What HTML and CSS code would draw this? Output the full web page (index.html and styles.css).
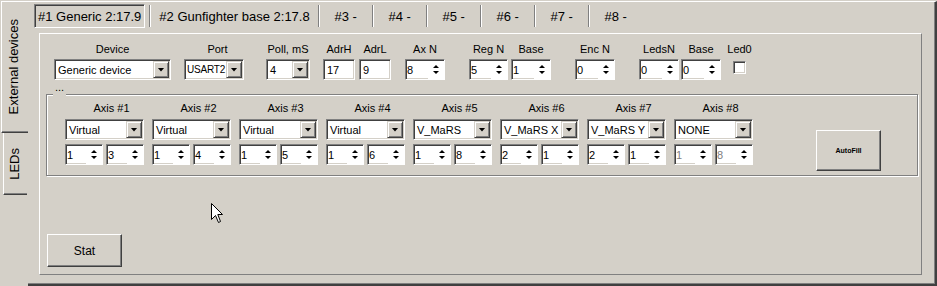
FILE: index.html
```html
<!DOCTYPE html>
<html lang="en">

<head>
    <meta charset="UTF-8">
    <title>External devices</title>
    <link rel="stylesheet" href="styles.css">
</head>

<body>
    <div class="window">
        <div class="vtabs">
            <div class="vtab active"><span>External devices</span></div>
            <div class="vtab leds"><span>LEDs</span></div>
        </div>

        <div class="outer">
            <div class="tabs">
                <div class="tab active">#1 Generic 2:17.9</div>
                <i class="sep"></i>
                <div class="tab">#2 Gunfighter base 2:17.8</div>
                <i class="sep"></i>
                <div class="tab">#3 -</div>
                <i class="sep"></i>
                <div class="tab">#4 -</div>
                <i class="sep"></i>
                <div class="tab">#5 -</div>
                <i class="sep"></i>
                <div class="tab">#6 -</div>
                <i class="sep"></i>
                <div class="tab">#7 -</div>
                <i class="sep"></i>
                <div class="tab">#8 -</div>
            </div>

            <div class="page">
                <!-- device settings -->
                <div class="dev-row">
                    <div class="fld f-device">
                        <label>Device</label>
                        <div class="combo"><span class="val">Generic device</span><span class="drop"></span></div>
                    </div>
                    <div class="fld f-port">
                        <label>Port</label>
                        <div class="combo"><span class="val">USART2</span><span class="drop"></span></div>
                    </div>
                    <div class="fld f-poll">
                        <label>Poll, mS</label>
                        <div class="combo"><span class="val">4</span><span class="drop"></span></div>
                    </div>
                    <div class="fld f-adrh">
                        <label>AdrH</label>
                        <div class="edit">17</div>
                    </div>
                    <div class="fld f-adrl">
                        <label>AdrL</label>
                        <div class="edit">9</div>
                    </div>
                    <div class="fld f-axn">
                        <label>Ax N</label>
                        <div class="spin"><span class="txt">8</span><span class="arrows"></span></div>
                    </div>
                    <div class="fld f-regn">
                        <label>Reg N</label>
                        <div class="spin"><span class="txt">5</span><span class="arrows"></span></div>
                    </div>
                    <div class="fld f-base">
                        <label>Base</label>
                        <div class="spin"><span class="txt">1</span><span class="arrows"></span></div>
                    </div>
                    <div class="fld f-encn">
                        <label>Enc N</label>
                        <div class="spin"><span class="txt">0</span><span class="arrows"></span></div>
                    </div>
                    <div class="fld f-ledsn">
                        <label>LedsN</label>
                        <div class="spin"><span class="txt">0</span><span class="arrows"></span></div>
                    </div>
                    <div class="fld f-base2">
                        <label>Base</label>
                        <div class="spin"><span class="txt">0</span><span class="arrows"></span></div>
                    </div>
                    <div class="fld f-led0">
                        <label>Led0</label>
                        <div class="check"></div>
                    </div>
                </div>

                <!-- axes -->
                <div class="group">
                    <span class="caption">...</span>
                    <div class="axes">
                        <div class="axis">
                            <label>Axis #1</label>
                            <div class="combo"><span class="val">Virtual</span><span class="drop"></span></div>
                            <div class="pair">
                                <div class="spin"><span class="txt">1</span><span class="arrows"></span></div>
                                <div class="spin"><span class="txt">3</span><span class="arrows"></span></div>
                            </div>
                        </div>
                        <div class="axis">
                            <label>Axis #2</label>
                            <div class="combo"><span class="val">Virtual</span><span class="drop"></span></div>
                            <div class="pair">
                                <div class="spin"><span class="txt">1</span><span class="arrows"></span></div>
                                <div class="spin"><span class="txt">4</span><span class="arrows"></span></div>
                            </div>
                        </div>
                        <div class="axis">
                            <label>Axis #3</label>
                            <div class="combo"><span class="val">Virtual</span><span class="drop"></span></div>
                            <div class="pair">
                                <div class="spin"><span class="txt">1</span><span class="arrows"></span></div>
                                <div class="spin"><span class="txt">5</span><span class="arrows"></span></div>
                            </div>
                        </div>
                        <div class="axis">
                            <label>Axis #4</label>
                            <div class="combo"><span class="val">Virtual</span><span class="drop"></span></div>
                            <div class="pair">
                                <div class="spin"><span class="txt">1</span><span class="arrows"></span></div>
                                <div class="spin"><span class="txt">6</span><span class="arrows"></span></div>
                            </div>
                        </div>
                        <div class="axis">
                            <label>Axis #5</label>
                            <div class="combo"><span class="val">V_MaRS</span><span class="drop"></span></div>
                            <div class="pair">
                                <div class="spin"><span class="txt">1</span><span class="arrows"></span></div>
                                <div class="spin"><span class="txt">8</span><span class="arrows"></span></div>
                            </div>
                        </div>
                        <div class="axis">
                            <label>Axis #6</label>
                            <div class="combo"><span class="val">V_MaRS X</span><span class="drop"></span></div>
                            <div class="pair">
                                <div class="spin"><span class="txt">2</span><span class="arrows"></span></div>
                                <div class="spin"><span class="txt">1</span><span class="arrows"></span></div>
                            </div>
                        </div>
                        <div class="axis">
                            <label>Axis #7</label>
                            <div class="combo"><span class="val">V_MaRS Y</span><span class="drop"></span></div>
                            <div class="pair">
                                <div class="spin"><span class="txt">2</span><span class="arrows"></span></div>
                                <div class="spin"><span class="txt">1</span><span class="arrows"></span></div>
                            </div>
                        </div>
                        <div class="axis">
                            <label>Axis #8</label>
                            <div class="combo"><span class="val">NONE</span><span class="drop"></span></div>
                            <div class="pair">
                                <div class="spin disabled"><span class="txt">1</span><span class="arrows"></span></div>
                                <div class="spin disabled"><span class="txt">8</span><span class="arrows"></span></div>
                            </div>
                        </div>
                    </div>
                    <button class="btn autofill">AutoFill</button>
                </div>

                <button class="btn stat">Stat</button>
            </div>
        </div>

        <svg class="cursor" width="13" height="21" viewBox="0 0 13 21">
            <path d="M0.5 0.5 V16.5 L4.5 12.5 L7.5 19.5 L9.5 18.5 L6.8 11.5 H11.5 Z" fill="#fff" stroke="#000" stroke-width="1" />
        </svg>
    </div>
</body>

</html>
```

FILE: styles.css
```css
* {
    box-sizing: border-box;
}

body {
    margin: 0;
    background: #d4d0c8;
    font-family: "Liberation Sans", Arial, sans-serif;
    font-size: 11px;
    color: #000;
    overflow: hidden;
}

.window {
    position: relative;
    display: flex;
    width: 937px;
    height: 286px;
    padding-top: 1px;
}

/* left side tabs */
.vtabs {
    flex: none;
    width: 28px;
    display: flex;
    flex-direction: column;
}

.vtab {
    display: flex;
    align-items: center;
    justify-content: center;
    font-size: 13px;
}

.vtab span {
    writing-mode: vertical-rl;
    transform: rotate(180deg);
    white-space: nowrap;
}

.vtab.active {
    margin-left: 1px;
    height: 132px;
    padding-right: 4px;
    border-top: 1px solid #fff;
    border-left: 1px solid #fff;
    border-bottom: 1px solid #404040;
    box-shadow: inset 0 -1px #808080;
}

.vtab.leds {
    margin-left: 3px;
    width: 24px;
    height: 62px;
    padding-right: 2px;
    border-left: 1px solid #fff;
    border-bottom: 1px solid #404040;
    box-shadow: inset 0 -1px #808080;
}

.outer {
    flex: 1;
    border-top: 1px solid #fff;
    border-right: 2px solid #404040;
    border-bottom: 2px solid #404040;
    box-shadow: inset -1px -1px #808080;
}

/* top tabs */
.tabs {
    display: flex;
    align-items: center;
    height: 24px;
    margin: 2px 0 0 6px;
}

.tab {
    display: flex;
    align-items: center;
    justify-content: center;
    height: 24px;
    min-width: 44px;
    padding: 0 3px;
    border: 1px solid transparent;
    font-size: 13px;
    white-space: nowrap;
}

.tab.active {
    border-color: #808080 #fff #fff #808080;
    box-shadow: inset 1px 1px #404040;
}

.sep {
    width: 2px;
    height: 22px;
    margin: 0 4px;
    border-left: 1px solid #808080;
    border-right: 1px solid #fff;
}

.page {
    width: 883px;
    height: 242px;
    margin: 5px 0 0 11px;
    padding: 9px 0 0 6px;
    border: 1px solid;
    border-color: #fff #808080 #808080 #fff;
}

/* controls */
.combo,
.edit,
.spin,
.check {
    height: 21px;
    background: #fff;
    border: 1px solid;
    border-color: #808080 #fff #fff #808080;
    box-shadow: inset 1px 1px #404040, inset -1px -1px #d4d0c8;
}

.combo {
    display: flex;
    align-items: center;
    padding: 1px;
}

.combo .val {
    flex: 1;
    min-width: 0;
    padding-left: 2px;
    white-space: nowrap;
    overflow: hidden;
}

.drop {
    flex: none;
    display: flex;
    align-items: center;
    justify-content: center;
    width: 16px;
    height: 17px;
    background: #d4d0c8;
    border: 1px solid;
    border-color: #d4d0c8 #404040 #404040 #d4d0c8;
    box-shadow: inset 1px 1px #fff, inset -1px -1px #808080;
}

.drop::after {
    content: "";
    width: 7px;
    height: 4px;
    background: #000;
    clip-path: polygon(0 0, 7px 0, 3.5px 4px);
}

.edit {
    display: flex;
    align-items: center;
    padding-left: 3px;
}

.spin {
    display: flex;
    padding: 1px 0 0 1px;
    box-shadow: inset 1px 1px #404040;
}

.spin .txt {
    flex: 1;
    display: flex;
    align-items: center;
    border-bottom: 1px solid #d4d0c8;
}

.spin.disabled .txt {
    color: #808080;
}

.arrows {
    flex: none;
    width: 16px;
    display: flex;
    flex-direction: column;
    align-items: center;
    justify-content: center;
    gap: 3px;
    padding-bottom: 2px;
}

.arrows::before,
.arrows::after {
    content: "";
    border-left: 3px solid transparent;
    border-right: 3px solid transparent;
}

.arrows::before {
    border-bottom: 3px solid #000;
}

.arrows::after {
    border-top: 3px solid #000;
}

.check {
    width: 13px;
    height: 13px;
    margin-top: 2px;
}

/* device row */
.dev-row {
    display: flex;
    align-items: flex-start;
    padding-left: 8px;
}

.fld {
    display: flex;
    flex-direction: column;
    align-items: center;
}

.fld label {
    line-height: 13px;
    margin-bottom: 3px;
    white-space: nowrap;
}

.fld .combo,
.fld .edit,
.fld .spin {
    align-self: stretch;
}

.f-device { width: 117px; }
.f-port { width: 60px; margin-left: 13px; }
.f-port label { padding-left: 7px; }
.f-port .val { padding-left: 1px; font-size: 10px; letter-spacing: -0.2px; }
.f-poll { width: 44px; margin-left: 22px; }
.f-adrh { width: 32px; margin-left: 13px; }
.f-adrl { width: 32px; margin-left: 4px; }
.f-axn { width: 40px; margin-left: 14px; }
.f-regn { width: 39px; margin-left: 24px; }
.f-base { width: 40px; margin-left: 3px; }
.f-encn { width: 40px; margin-left: 24px; }
.f-ledsn { width: 40px; margin-left: 24px; }
.f-base2 { width: 40px; margin-left: 2px; }
.f-led0 { width: 21px; margin-left: 8px; }

/* axes group */
.group {
    position: relative;
    display: flex;
    align-items: flex-start;
    width: 872px;
    height: 82px;
    margin-top: 14px;
    padding: 7px 0 0 18px;
    border: 1px solid #808080;
    box-shadow: 1px 1px #fff, inset 1px 1px #fff;
}

.caption {
    position: absolute;
    top: -13px;
    left: 6px;
    height: 15px;
    padding: 0 2px;
    line-height: 11px;
    background: #d4d0c8;
}

.axes {
    display: grid;
    grid-template-columns: repeat(8, 79px);
    column-gap: 8px;
}

.axis {
    display: flex;
    flex-direction: column;
}

.axis label {
    line-height: 13px;
    margin-bottom: 4px;
    padding-left: 14px;
    text-align: center;
    white-space: nowrap;
}

.pair {
    display: flex;
    gap: 3px;
    margin-top: 4px;
}

.pair .spin {
    flex: 1;
}

/* buttons */
.btn {
    display: block;
    background: #d4d0c8;
    border: 1px solid;
    border-color: #fff #404040 #404040 #fff;
    box-shadow: inset -1px -1px #808080;
    font-family: "Liberation Sans", Arial, sans-serif;
    color: #000;
    padding: 0;
}

.autofill {
    width: 65px;
    height: 41px;
    margin: 28px 0 0 63px;
    font-size: 7px;
    font-weight: bold;
}

.stat {
    width: 75px;
    height: 33px;
    margin: 58px 0 0 1px;
    font-size: 12px;
}

.cursor {
    position: absolute;
    left: 211px;
    top: 203px;
}
```
